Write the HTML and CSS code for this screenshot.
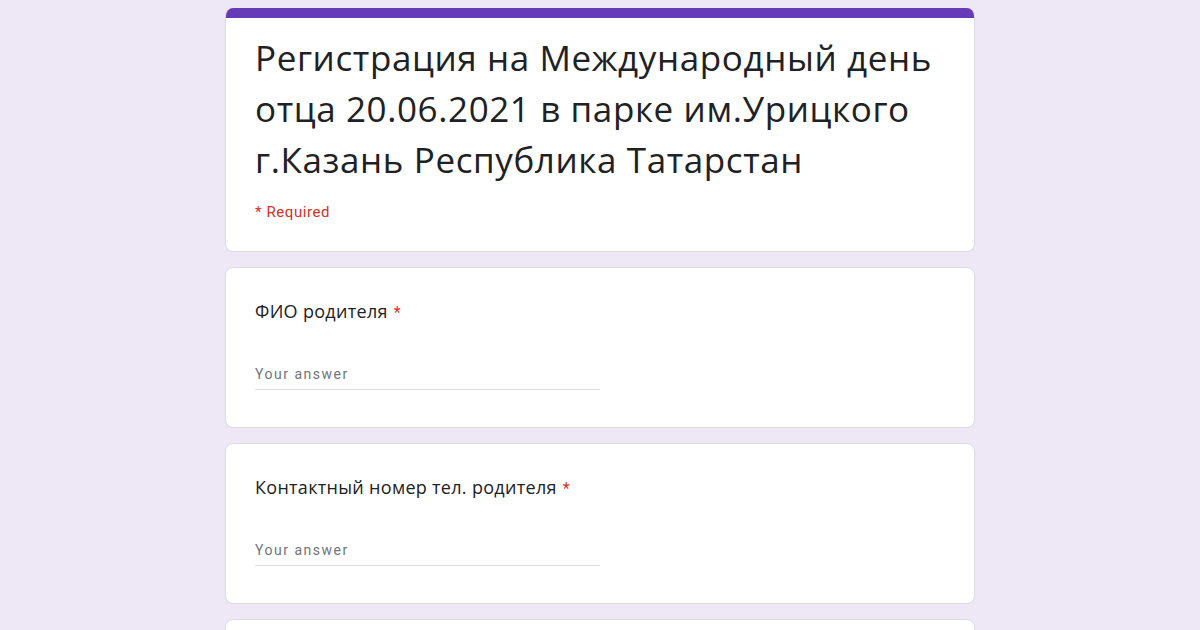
FILE: index.html
```html
<!DOCTYPE html>
<html lang="ru">
<head>
<meta charset="utf-8">
<title>Регистрация</title>
<link rel="stylesheet" href="styles.css">
</head>
<body>
<main class="form">
  <section class="card header-card">
    <div class="accent"></div>
    <div class="header-body">
      <h1 class="title">Регистрация на Международный день отца 20.06.2021 в парке им.Урицкого г.Казань Республика Татарстан</h1>
      <div class="required-note">* Required</div>
    </div>
  </section>
  <section class="card question">
    <div class="q-label">ФИО родителя <span class="star">*</span></div>
    <div class="answer">Your answer</div>
  </section>
  <section class="card question">
    <div class="q-label">Контактный номер тел. родителя <span class="star">*</span></div>
    <div class="answer">Your answer</div>
  </section>
  <section class="card question"></section>
</main>
</body>
</html>
```
FILE: styles.css
```css
html, body {
  margin: 0;
  padding: 0;
  background: #ede7f6;
  height: 630px;
  overflow: hidden;
}
body {
  padding-top: 8px;
  font-family: Roboto, "Noto Sans", sans-serif;
  color: #202124;
}
.form {
  width: 750px;
  margin: 0 auto;
  display: flex;
  flex-direction: column;
  gap: 15px;
}
.card {
  background: #fff;
  border: 1px solid #dadce0;
  border-radius: 8px;
  box-sizing: border-box;
}
.header-card {
  border-top: none;
  overflow: hidden;
  height: 244px;
}
.accent {
  height: 10px;
  background: #673ab7;
}
.header-body {
  padding: 14px 29px 0;
}
.title {
  margin: 0;
  font-family: "Open Sans", sans-serif;
  font-weight: 400;
  font-size: 35px;
  letter-spacing: 0.6px;
  line-height: 51px;
  color: #202124;
}
.required-note {
  margin-top: 18px;
  font-size: 15px;
  letter-spacing: 0.6px;
  color: #d93025;
}
.question {
  height: 161px;
  padding: 31px 29px 0;
}
.q-label {
  font-family: "Open Sans", sans-serif;
  font-size: 18px;
  letter-spacing: 0.3px;
  line-height: 24px;
  height: 24px;
  color: #202124;
}
.star {
  font-family: Roboto, sans-serif;
  font-size: 16px;
  line-height: 0;
  margin-left: 1px;
  color: #d93025;
}
.answer {
  margin-top: 41px;
  width: 345px;
  font-size: 14px;
  letter-spacing: 1.5px;
  line-height: 20px;
  padding-bottom: 5px;
  color: #70757a;
  border-bottom: 1px solid #e0e0e0;
}
```
